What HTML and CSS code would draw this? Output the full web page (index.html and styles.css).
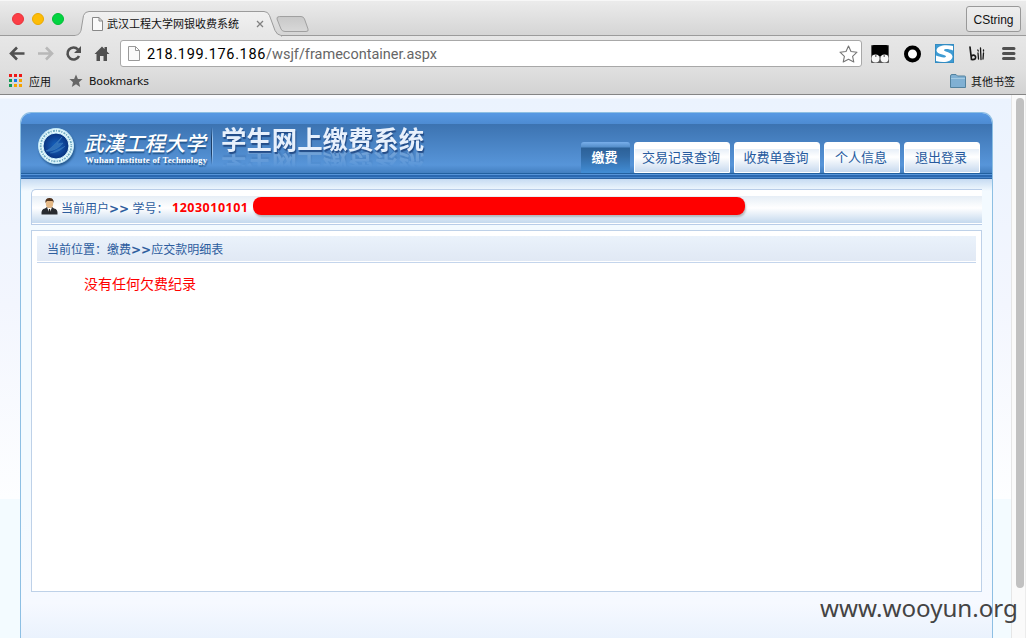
FILE: index.html
```
<!DOCTYPE html>
<html lang="zh-CN">
<head>
    <meta charset="utf-8">
    <title>武汉工程大学网银收费系统</title>
    <link rel="stylesheet" href="styles.css">
</head>
<body>
    <div class="tabstrip">
        <div class="lights"><i class="red"></i><i class="yellow"></i><i class="green"></i></div>
        <div class="tab">
            <svg class="tab-shape" width="238" height="26" viewBox="0 0 238 26">
                <defs><linearGradient id="tabfill" x1="0" y1="0" x2="0" y2="1"><stop offset="0" stop-color="#f1f1f1"/><stop offset="1" stop-color="#e6e6e6"/></linearGradient>
                <linearGradient id="newfill" x1="0" y1="0" x2="0" y2="1"><stop offset="0" stop-color="#c8c8c8"/><stop offset="1" stop-color="#d8d8d8"/></linearGradient></defs>
                <path d="M0 24.5 C4 24 5 22 6 19.500 L8.500 4.500 Q10 .5 14 .5 H189 Q193 .5 194.500 4.500 L200 19.500 Q202 24 206 24.500 V26 H0z" fill="url(#tabfill)" stroke="#9b9b9b"/>
                <path d="M0 25.500H206" stroke="#e7e7e7" stroke-width="1.500"/>
                <path d="M204.500 5.500H226Q228.500 5.500 229.500 8L233 18Q234 20.500 231 20.500H210Q207 20.500 206 18L202 8Q201.500 5.500 204.500 5.500z" fill="url(#newfill)" stroke="#a0a0a0"/>
            </svg>
            <svg class="doc" width="11" height="14" viewBox="0 0 11 14"><path d="M.5.5H7L10.500 4V13.500H.5zM7 .5V4H10.500" fill="#fafafa" stroke="#888"/></svg>
            <span class="tab-title">武汉工程大学网银收费系统</span>
            <svg class="close" width="8" height="8" viewBox="0 0 8 8"><path d="M1 1L7 7M7 1L1 7" stroke="#808080" stroke-width="1.300"/></svg>
        </div>
        <div class="profile">CString</div>
    </div>
    <div class="toolbar">
        <svg class="nav" width="110" height="20" viewBox="0 0 110 20">
            <g fill="none" stroke="#505050" stroke-width="2.600">
                <path d="M24.500 9.500H11.500M17 3.500L11 9.500L17 15.500"/>
                <path d="M38 9.500H51M46 3.500L52 9.500L46 15.500" stroke="#b8b8b8"/>
                <path d="M79 12A6 6 0 1 1 78 5.500"/>
            </g>
            <path d="M81 2V9H74zM94.500 10L102 2.500L104.500 5V3H107V7.500L109.500 10H107V17H103.500V12H100V17H96.500V10z" fill="#505050"/>
        </svg>
        <div class="omnibox">
            <svg width="12" height="15" viewBox="0 0 12 15"><path d="M.5.5H7.500L11.500 4.500V14.500H.5zM7.500 .5V4.500H11.500" fill="#fafafa" stroke="#999"/></svg>
            <span class="url"><b>218.199.176.186</b>/wsjf/framecontainer.aspx</span>
            <svg class="star" width="19" height="18" viewBox="0 0 19 18"><path d="M9.500 1L12 6.500L18 7.200L13.600 11.300L14.800 17L9.500 14.200L4.200 17L5.400 11.300L1 7.200L7 6.500z" fill="#fff" stroke="#757575" stroke-width="1.100" stroke-linejoin="round"/></svg>
        </div>
        <svg class="extensions" width="154" height="20" viewBox="0 0 154 20">
            <rect x="0" y="1" width="18" height="18" rx="1" fill="#555"/><rect x="1" y="1" width="16" height="11" rx="2" fill="#000"/>
            <circle cx="4.500" cy="14.500" r="4" fill="#f7f7f7"/><circle cx="13.500" cy="14.500" r="4" fill="#f7f7f7"/><path d="M4 12h1.500M12.500 12H14" stroke="#111"/>
            <circle cx="41.500" cy="10" r="6.500" fill="#fff" stroke="#000" stroke-width="4"/>
            <rect x="64.500" y=".5" width="18" height="18" fill="#3e9bd3" stroke="#348cc2"/>
            <path d="M82 2C76 .5 66 .5 65.500 6.500C66 11 75 10 75 12.500C74 14.500 69 13 65 11.500V17C72 19 81 18.500 81.500 12.500C81 7.500 73 8.500 73 6C74 4.500 78 5 82 6.500z" fill="#fff"/>
            <g fill="none" stroke="#171717" stroke-width="1.700" stroke-linecap="round"><path d="M99 3L100.500 15.500Q105.500 16 104.500 12.500Q103 10 100.500 12"/><path d="M107 9L107.500 15M109.500 4L110 15.500M112.500 9L112 15M106.800 6L107.300 7M112.500 6V7" stroke-width="1.300"/></g>
            <path d="M132.500 4.500H143M132.500 9.500H143M132.500 14.500H143" stroke="#505050" stroke-width="3" stroke-linecap="round"/>
        </svg>
    </div>
    <div class="bookmarks">
        <div class="apps"><i></i><i></i><i></i><i></i><i></i><i></i><i></i><i></i><i></i></div>
        <span class="apps-label">应用</span>
        <svg class="bookmark-star" width="14" height="14" viewBox="0 0 14 14"><path d="M7 .5L8.900 5H13.500L10 8.300L11.200 13L7 10.300L2.800 13L4 8.300L.5 5H5.100z" fill="#666"/></svg>
        <span class="bookmark-label">Bookmarks</span>
        <svg class="folder" width="16" height="14" viewBox="0 0 16 14"><path d="M.5 2Q.5.5 2 .5H6L7.500 2H14.500Q15.500 2 15.500 3V13.500H.5z" fill="#80b0d3" stroke="#53829f"/><path d="M1 4.500H15" stroke="#a5cbe3"/></svg>
        <span>其他书签</span>
    </div>

    <div class="viewport">
        <div class="page">
            <div class="header">
                <svg class="seal" width="38" height="38" viewBox="0 0 38 38">
                    <defs><radialGradient id="seal"><stop offset="0" stop-color="#1767c4"/><stop offset="1" stop-color="#09327f"/></radialGradient></defs>
                    <circle cx="19" cy="19" r="17.500" fill="#e5f8fd" stroke="#c3e9f8"/>
                    <circle cx="19" cy="19" r="15.300" fill="none" stroke="#73adc4" stroke-width="1.800" stroke-dasharray="1.200 1.300 2 1"/>
                    <circle cx="19" cy="19" r="13" fill="url(#seal)" stroke="#d3f6ff"/>
                    <path d="M9 24C14 22 20 15 25 10L20 17L26 16C22 21 15 25 9 24M13 26C20 26 25 22 28 19" fill="#2f70b8" stroke="#4381c0" stroke-width=".5"/>
                </svg>
                <div class="school">
                    <div class="school-cn">武漢工程大学</div>
                    <div class="school-en">Wuhan Institute of Technology</div>
                </div>
                <div class="divider"></div>
                <div class="system">学生网上缴费系统</div>
                <div class="menu">
                    <a class="w50 active">缴费</a>
                    <a class="w96">交易记录查询</a>
                    <a class="w86">收费单查询</a>
                    <a class="w76">个人信息</a>
                    <a class="w76">退出登录</a>
                </div>
            </div>
            <div class="stripes"></div>
            <div class="content">
                <div class="user">
                    <svg width="17" height="22" viewBox="0 0 17 22">
                        <path d="M.5 17.500Q0 12 4 11.500L6 10H11L13 11.500Q17 12 16.500 17.500z" fill="#292c31"/>
                        <path d="M6 10.500L8.500 16L11 10.500z" fill="#fff"/><path d="M8 12H9L9.500 15L8.500 16.500L7.500 15z" fill="#222"/>
                        <ellipse cx="8.500" cy="6.500" rx="3.700" ry="4.500" fill="#e4b987"/><path d="M4.300 6Q4 1 8.500 1Q13 1 12.700 6L11.500 4H6z" fill="#51341f"/>
                    </svg>
                    <span class="user-label">当前用户<b>&gt;&gt;</b> 学号：</span>
                    <b class="number">1203010101</b>
                    <div class="redacted"></div>
                </div>
                <div class="main">
                    <div class="location">当前位置：缴费<b>&gt;&gt;</b>应交款明细表</div>
                    <div class="message">没有任何欠费纪录</div>
                </div>
            </div>
        </div>
        <div class="scrollbar"><div class="thumb"></div></div>
    </div>
    <div class="watermark">www.wooyun.org</div>
</body>
</html>
```
FILE: styles.css
```
* { margin: 0; padding: 0; box-sizing: border-box; }
body { width: 1026px; height: 638px; overflow: hidden; background: #fff; font: 12px "Liberation Sans", "Noto Sans CJK SC", sans-serif; color: #111; white-space: nowrap; }
svg { display: block; flex: none; }

/* browser window */
.tabstrip { height: 36px; display: flex; background: linear-gradient(#ececec, #d5d5d5); border-bottom: 1px solid #9b9b9b; box-shadow: inset 0 1px #f7f7f7; }
.lights { display: flex; gap: 8px; padding: 13px 0 0 12px; width: 75px; }
.lights i { width: 12px; height: 12px; border-radius: 50%; }
.red { background: #fc3e46; border: 1px solid #e8333b; }
.yellow { background: #fdbc06; border: 1px solid #eaa900; }
.green { background: #02d441; border: 1px solid #02bd35; }
.tab { position: relative; display: flex; width: 238px; height: 26px; margin-top: 11px; padding-left: 17px; }
.tab-shape { position: absolute; left: 0; top: 0; }
.doc, .tab-title, .close { position: relative; }
.doc { margin-top: 6px; }
.tab-title { width: 133px; margin-left: 4px; font-size: 11px; line-height: 26px; }
.close { margin: 9px 0 0 16px; }
.profile { width: 55px; height: 26px; margin: 6px 5px 0 auto; border: 1px solid #999; border-radius: 3px; background: linear-gradient(#eee, #e2e2e2); font-size: 12px; line-height: 26px; text-align: center; }
.toolbar { height: 34px; display: flex; background: linear-gradient(#e7e7e7, #dfdfdf); }
.nav { margin-top: 8px; }
.omnibox { width: 742px; height: 27px; margin: 4px 0 0 10px; padding: 0 3px 0 7px; display: flex; align-items: center; background: #fff; border: 1px solid #a8a8a8; border-radius: 3px; }
.url { margin-left: 7px; padding-top: 2px; font: 14.500px Roboto, sans-serif; color: #666; }
.url b { font-weight: normal; letter-spacing: .65px; color: #000; }
.star { margin-left: auto; }
.extensions { margin: 8px 0 0 9px; }
.bookmarks { height: 25px; display: flex; align-items: center; padding: 0 11px 3px 9px; background: linear-gradient(#dfdfdf, #d3d3d3); border-bottom: 1px solid #858585; font-size: 11px; }
.apps { display: grid; grid-template-columns: 3px 3px 3px; grid-auto-rows: 3px; gap: 2px; }
.apps i { background: #f5a300; }
.apps i:nth-child(-n+3) { background: #ee1818; }
.apps i:nth-child(4), .apps i:nth-child(7) { background: #129a55; }
.apps i:nth-child(5) { background: #1679ef; }
.apps-label { margin: 0 18px 0 7px; }
.bookmark-label { margin-left: 6px; padding-top: 1px; font: 11px "DejaVu Sans", sans-serif; letter-spacing: -.2px; }
.folder { margin: 0 5px 0 auto; }

/* site */
.viewport { height: 543px; display: flex; justify-content: space-between; padding-left: 20px; background: linear-gradient(#f9fbff 3px, #ebf3fe 4px, #f3f6fe 210px, #fdfeff 404px, #f3fbff 404px); }
.page { width: 973px; height: 526px; margin-top: 17px; border: 1px solid #8dbfe3; border-bottom: 0; border-radius: 11px 11px 0 0; overflow: hidden; background: linear-gradient(#f3faff 390px, #f6f9ff 490px, #eaf2fd); }
.header { display: flex; height: 60px; padding: 0 12px 0 16px; background: linear-gradient(#5799e4, #4d8bd2 11px, #3c73b1 11px, #5795d9 52px, #437fc0); }
.seal { margin-top: 14px; filter: drop-shadow(1px 2px 1px #24588f); }
.school { width: 124px; margin: 13px 0 0 10px; color: #fff; text-shadow: 1px 2px 1px #24588f; }
.school-cn { height: 29px; padding-left: 1px; font: 500 20.400px/33px "Noto Sans CJK TC", sans-serif; transform: skewX(-14deg); }
.school-en { font: bold 8.800px/11px "Liberation Serif", serif; letter-spacing: .22px; }
.divider { width: 2px; height: 38px; margin: 14px 0 0 2px; background: linear-gradient(90deg, #1d3f68 50%, #9cc4ee 50%); -webkit-mask-image: linear-gradient(transparent, #000 30%, #000 70%, transparent); mask-image: linear-gradient(transparent, #000 30%, #000 70%, transparent); }
.system { height: 32px; margin: 9px 0 0 8px; font: bold 25.400px/32px "Noto Sans CJK SC", sans-serif; color: #e7f0fc; text-shadow: 1px 2px 1px #244d88; -webkit-box-reflect: below -6px linear-gradient(transparent 40%, rgba(0, 0, 0, .3)); }
.menu { display: flex; gap: 4px; margin: 29px 0 0 auto; }
.menu a { height: 31px; padding-right: 2px; border: 1px solid #fff; border-radius: 3px 3px 0 0; background: linear-gradient(#fff 6px, #e7eff8 6px, #fff 14px, #c8daef); color: #265a9e; font-size: 13px; line-height: 29px; text-align: center; }
.menu .w50 { width: 49px; }
.menu .w96 { width: 96px; }
.menu .w86 { width: 86px; }
.menu .w76 { width: 76px; }
.menu .active { border: 0; background: linear-gradient(#78aeea, #558fcb 5px, #2c6198 6px, #326aa5 14px, #428dd5); color: #fff; font-weight: bold; line-height: 31px; }
.stripes { height: 6px; background: linear-gradient(#2361a0 1px, #5795d9 1px, #5795d9 2px, #2b68b0 2px, #2b68b0 4px, #4684ca 4px, #4684ca 5px, #2b63a4 5px); }
.content { padding: 10px 10px 0; background: linear-gradient(#c6dbf2, #f3faff 12px, transparent 12px); }
.user { height: 36px; display: flex; padding: 7px 0 0 9px; border: 1px solid #b9cde8; border-right: 0; border-radius: 5px 0 0; background: linear-gradient(#fff 6px, #e6eef6 6px, #fff 18px, #c5d9ee 33px, #fff 33px); color: #2d5d9e; }
.user-label { margin-left: 3px; width: 111px; line-height: 24px; }
.user-label b, .location b { font-family: "DejaVu Sans", sans-serif; font-size: 12px; }
.number { width: 81px; font: bold 12.500px/22px "Noto Sans", sans-serif; letter-spacing: .5px; color: #f00; }
.redacted { width: 492px; height: 18px; background: #f00; border-radius: 8px; box-shadow: 1px 2px 2px #8888; }
.main { width: 951px; height: 362px; margin-top: 5px; padding: 5px; border: 1px solid #bed1e8; background: #fff; }
.location { height: 27px; padding-left: 10px; border-bottom: 1px solid #c4d5ec; box-shadow: inset 0 -1px #fff; background: linear-gradient(#eaf2fb, #e0e8f4); color: #2d5d9e; line-height: 28px; }
.message { margin: 10px 0 0 47px; color: #f00; font-size: 14px; line-height: 22px; }
.scrollbar { width: 15px; padding: 3px 0 0 4px; background: #fafafa; border-left: 1px solid #e6e6e6; border-right: 1px solid #ececec; }
.thumb { width: 8px; height: 490px; border-radius: 4px; background: #c1c1c1; }
.watermark { position: absolute; left: 820px; top: 590px; font: 24.150px/36px "Noto Sans", sans-serif; color: #444; }
```
